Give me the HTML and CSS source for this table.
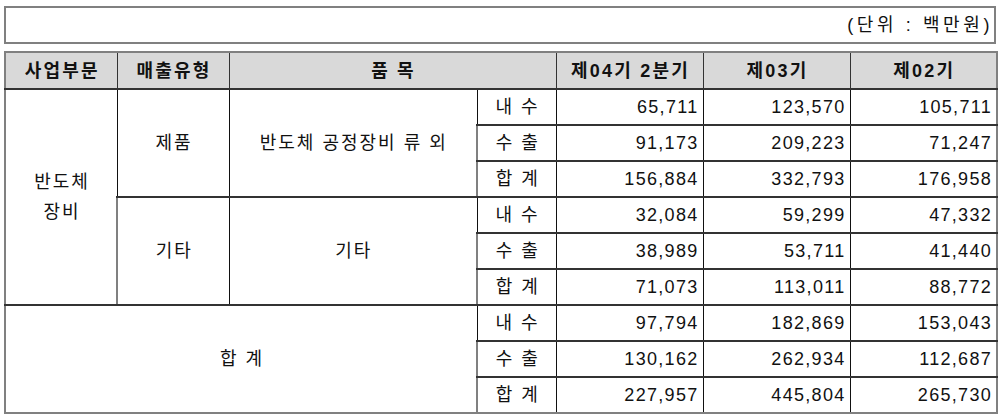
FILE: index.html
```html
<!DOCTYPE html>
<html lang="ko">
<head>
<meta charset="utf-8">
<link rel="stylesheet" href="styles.css">
</head>
<body>
<div class="page">
  <div class="unit">(단위 : 백만원)</div>
  <table class="sales">
    <colgroup>
      <col class="c1"><col class="c2"><col class="c3"><col class="c4"><col class="c5"><col class="c6"><col class="c7">
    </colgroup>
    <thead>
      <tr>
        <th>사업부문</th>
        <th>매출유형</th>
        <th colspan="2">품 목</th>
        <th>제04기 2분기</th>
        <th>제03기</th>
        <th>제02기</th>
      </tr>
    </thead>
    <tbody>
      <tr>
        <td rowspan="6" class="center seg">반도체<br>장비</td>
        <td rowspan="3" class="center">제품</td>
        <td rowspan="3" class="center">반도체 공정장비 류 외</td>
        <td class="center">내 수</td>
        <td class="num">65,711</td><td class="num">123,570</td><td class="num">105,711</td>
      </tr>
      <tr>
        <td class="center">수 출</td>
        <td class="num">91,173</td><td class="num">209,223</td><td class="num">71,247</td>
      </tr>
      <tr>
        <td class="center">합 계</td>
        <td class="num">156,884</td><td class="num">332,793</td><td class="num">176,958</td>
      </tr>
      <tr>
        <td rowspan="3" class="center">기타</td>
        <td rowspan="3" class="center">기타</td>
        <td class="center">내 수</td>
        <td class="num">32,084</td><td class="num">59,299</td><td class="num">47,332</td>
      </tr>
      <tr>
        <td class="center">수 출</td>
        <td class="num">38,989</td><td class="num">53,711</td><td class="num">41,440</td>
      </tr>
      <tr>
        <td class="center">합 계</td>
        <td class="num">71,073</td><td class="num">113,011</td><td class="num">88,772</td>
      </tr>
      <tr>
        <td rowspan="3" colspan="3" class="center total">합 계</td>
        <td class="center">내 수</td>
        <td class="num">97,794</td><td class="num">182,869</td><td class="num">153,043</td>
      </tr>
      <tr>
        <td class="center">수 출</td>
        <td class="num">130,162</td><td class="num">262,934</td><td class="num">112,687</td>
      </tr>
      <tr>
        <td class="center">합 계</td>
        <td class="num">227,957</td><td class="num">445,804</td><td class="num">265,730</td>
      </tr>
    </tbody>
  </table>
</div>
</body>
</html>
```

FILE: styles.css
```css
html, body {
  margin: 0;
  padding: 0;
  background: #ffffff;
}

.page {
  padding: 6px 6px 0 4px;
  width: 992px;
  font-family: "Liberation Sans", "Noto Sans CJK KR", sans-serif;
  font-size: 18px;
  color: #111;
}

.unit {
  box-sizing: border-box;
  height: 38px;
  border: 2px solid #808080;
  text-align: right;
  padding: 5px 1px 0 0;
  line-height: 24px;
  margin-bottom: 7px;
  letter-spacing: 3.6px;
}

.sales {
  width: 992px;
  border-collapse: collapse;
  table-layout: fixed;
  border: 2px solid #808080;
}

.c1 { width: 112px; }
.c2 { width: 112px; }
.c3 { width: 248px; }
.c4 { width: 79px; }
.c5 { width: 147px; }
.c6 { width: 147px; }
.c7 { width: 147px; }

.sales th {
  background: #d9d9d9;
  font-weight: bold;
  height: 35px;
  padding: 0 0 0 2px;
  border-left: 1px solid #333;
  border-right: 1px solid #333;
  border-top: 2px solid #808080;
  border-bottom: 2px solid #333;
  text-align: center;
  color: #111;
  line-height: 22px;
  letter-spacing: 2.2px;
}

.sales td {
  height: 34px;
  padding: 0 6px 0 6px;
  border-left: 1px solid #111;
  border-right: 1px solid #111;
  border-top: 2px solid #333;
  border-bottom: 2px solid #333;
  line-height: 22px;
}

.sales tr > :first-child { border-left: 2px solid #808080; }
.sales tr > :last-child { border-right: 2px solid #808080; }
.sales tbody tr:last-child td { border-bottom: 2px solid #808080; }
.sales td.total { border-bottom: 2px solid #808080; }

.sales td.center { text-align: center; letter-spacing: 2px; padding-left: 8px; }
.sales td.num { text-align: right; padding-right: 4px; letter-spacing: 1.3px; }
.sales td.seg { line-height: 30px; }
```
